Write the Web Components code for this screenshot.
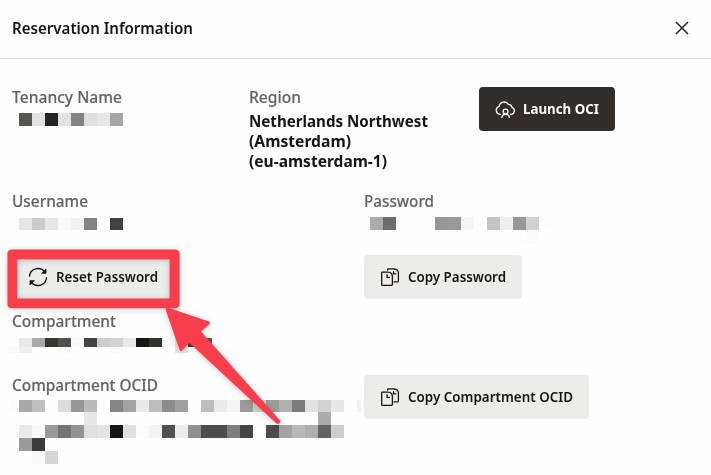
<!DOCTYPE html>
<html lang="en"><head><meta charset="utf-8"><title>Reservation Information</title>
<style>html,body{margin:0;background:#fefefe}body{width:711px;height:475px;overflow:hidden;font-family:"Noto Sans","Open Sans",sans-serif}</style></head>
<body><reservation-dialog></reservation-dialog>
<script>
// One line of text whose width is adjusted to a given measure.
customElements.define('fit-text', class extends HTMLElement {
  connectedCallback() {
    const r = this.attachShadow({mode:'open'});
    r.innerHTML = `<style>:host{display:block;white-space:nowrap;font-size:var(--size,16px);line-height:20px}span{display:inline-block;transform-origin:0 50%}</style><span><slot></slot></span>`;
    const s = r.querySelector('span'), w = +this.getAttribute('w');
    this.style.width = w + 'px';
    s.style.transform = `scaleX(${w / s.getBoundingClientRect().width})`;
  }
});
// Redacted value: rows of "indent:height:colours", "-" is an empty cell.
customElements.define('pixel-mask', class extends HTMLElement {
  connectedCallback() {
    const r = this.attachShadow({mode:'open'});
    const rows = this.getAttribute('rows').split('|').map(t => {
      const [x,h,c] = t.trim().split(':');
      return `<div style="height:${h}px;margin-left:${x}px">` + c.split(' ').map(k => {
        const [col,w] = k.split('/');
        return `<i style="width:${w||13}px;${col==='-'?'':'background:#'+col}"></i>`;
      }).join('') + '</div>';
    }).join('');
    r.innerHTML = `<style>:host{display:block}div{display:flex}i{flex:none;height:100%}</style>${rows}`;
  }
});
const icons = {
  cloud:`<path d="M6.2 15.3H5A4.1 4.1 0 0 1 4.2 7.3 5 5 0 0 1 13.4 5.4 3.8 3.8 0 0 1 17 8.4 3.6 3.6 0 0 1 16.6 15.3H15"/><circle cx="10.6" cy="12.6" r="2.4"/><path d="M6.7 19C7.2 14 14 14 14.5 19"/>`,
  reset:`<path d="M1.5 9.8A8.5 8.5 0 0 1 16.8 5M18.5 10.2A8.5 8.5 0 0 1 3.2 15"/><path d="M18 2V6.3H13.6ZM2 18V13.7H6.4Z" fill="currentColor" stroke-width=".8"/>`,
  copy:`<path d="M7.6 3.4V2.5Q7.6 1.8 8.4 1.8H14Q18.4 2.3 18.4 6.2V14.1Q18.4 14.9 17.6 14.9H13.6M13.5 4V6.9H16.2"/><path d="M2.5 5.2H8Q12.4 5.6 12.4 9.6V17.6Q12.4 18.4 11.6 18.4H2.5Q1.7 18.4 1.7 17.6V6Q1.7 5.2 2.5 5.2ZM7 7.3V10.3H10"/>`
};
customElements.define('action-button', class extends HTMLElement {
  connectedCallback() {
    const r = this.attachShadow({mode:'open'});
    r.innerHTML = `<style>:host{display:block;width:max-content;--size:14.5px}button{all:unset;box-sizing:border-box;display:flex;align-items:center;height:44px;padding:0 16px;border-radius:4px;background:#ececea;color:#161513;font-weight:600;gap:8px}:host([dark]) button{background:#312d2a;color:#fff;font-weight:700}svg{width:20px;height:20px;flex:none;fill:none;stroke:currentColor;stroke-width:1.3;stroke-linejoin:round}fit-text{margin-top:-3px}</style><button><svg viewBox="0 0 20 20">${icons[this.getAttribute('icon')]}</svg><fit-text w="${this.getAttribute('w')}"><slot></slot></fit-text></button>`;
  }
});
customElements.define('info-field', class extends HTMLElement {
  connectedCallback() {
    const r = this.attachShadow({mode:'open'});
    r.innerHTML = `<style>:host{display:block}.l{color:#656461;font-weight:500;-webkit-text-stroke:.15px #656461}</style><fit-text class="l" w="${this.getAttribute('w')}">${this.getAttribute('label')}</fit-text><slot></slot>`;
  }
});
// Callout: frame round the reset button with an arrow that points to it.
customElements.define('callout-mark', class extends HTMLElement {
  connectedCallback() {
    this.attachShadow({mode:'open'}).innerHTML = `<style>:host{position:absolute;left:0;top:0;pointer-events:none;filter:drop-shadow(0 1px 3px #0003)}svg{display:block}</style>
    <svg width="320" height="440" viewBox="0 0 320 440" fill="#f83e4b"><path fill-rule="evenodd" d="M12 249.4H175Q179.6 249.4 179.6 254V303.5Q179.6 308.2 175 308.2H12Q7.4 308.2 7.4 303.5V254Q7.4 249.4 12 249.4ZM17 259.2V298.4H169.6V259.2Z"/><path stroke="#f83e4b" stroke-width="3" stroke-linejoin="round" d="M167 309L208.5 323 199 331.5 279 421.5 277.5 422.5 189.5 341 181 349.5Z"/></svg>`;
  }
});
customElements.define('reservation-dialog', class extends HTMLElement {
  connectedCallback() {
    this.attachShadow({mode:'open'}).innerHTML = `<style>
    :host{display:block;position:relative;height:475px}
    header{box-sizing:border-box;height:59px;border-bottom:1px solid #e3e3e3;padding:0 22px 2px 12px;display:flex;align-items:center;justify-content:space-between;color:#161513;font-weight:600}
    header svg{width:14px;height:14px;stroke:#222;stroke-width:1.5}
    main{padding:28px 0 0 12px;display:grid;grid-template-rows:104px 64px 56px 64px 100px}
    .three{display:grid;grid-template-columns:237px 230px auto}
    .two{display:grid;grid-template-columns:352px auto}
    .region{color:#161513;font-weight:700;padding-top:4px}
    </style>
    <header><fit-text w="181">Reservation Information</fit-text><svg viewBox="0 0 14 14"><path d="M1 1L13 13M13 1L1 13"/></svg></header>
    <main>
      <section class="three">
        <info-field label="Tenancy Name" w="110"><pixel-mask style="padding-top:6px" rows="7:13:555552 e2e2e2 262523 e2e2e2 838381 dedede e6e6e6 a5a5a3"></pixel-mask></info-field>
        <info-field label="Region" w="52"><div class="region"><fit-text w="179">Netherlands Northwest</fit-text><fit-text w="102">(Amsterdam)</fit-text><fit-text w="138">(eu-amsterdam-1)</fit-text></div></info-field>
        <action-button dark icon="cloud" w="76">Launch OCI</action-button>
      </section>
      <section class="two">
        <info-field label="Username" w="76"><pixel-mask style="padding-top:7px" rows="7:12:e6e6e6 cbcbcb e6e6e4 fafafa f1f1f1 838381 - 434340"></pixel-mask></info-field>
        <info-field label="Password" w="70"><pixel-mask style="padding-top:6px" rows="6:13:ababa9 6d6d6d - - - 979797 9a9a97 f5f5f5 - c4c4c4 eeeeee 979794 d0d0d0 fcfcfc|162:13:fbfbfb"></pixel-mask></info-field>
      </section>
      <section class="two">
        <action-button icon="reset" w="102">Reset Password</action-button>
        <action-button icon="copy" w="98">Copy Password</action-button>
      </section>
      <section>
        <info-field label="Compartment" w="104"><pixel-mask style="padding-top:7px" rows="7:9:e9e9e9 a9a9a9 353532 4f4f4d f9f9f9 434341 cdcdcb d3d3d3 e9e9e7 161614 32312e fafafa e5e5e5 434341 555552/11|-4:6:fafafa/11 efefef - - fafafa - - - fafafa fcfcfc - - - e8e8e8"></pixel-mask></info-field>
      </section>
      <section class="two">
        <info-field label="Compartment OCID" w="146"><pixel-mask style="padding-top:5px" rows="-2:12:fcfcfc/9 abaaa8 c0c0be - dcdcda 989898 bbbbb9 - 848482 a3a3a1 e9e9e7 bdbdbd 8d8d8d a09f9d - bdbdbb ebebeb f4f4f4 9c9c9a d0d0d0 9c9c9a b0b0b0 7b7b79 e1e1df d3d3d1 e8e8e8 - f4f4f4/4|72:13:e8e8e8 -/221 ababab|7:13:e9e9e9 fafafa 999997 757573 939391 e0e0de e3e3e3 161614 e1e1e1 fcfcfc f4f4f4 51504e ececea 8f8f8d 4e4d4b 4e4d4b 7e7e7c 464543 - 4c4b49 a3a3a3 b8b8b8 aeaeae 646464 cdcdcd|7:13:9b9b9b 3a3a38|20:13:fafafa d6d6d6"></pixel-mask></info-field>
        <action-button icon="copy" w="165">Copy Compartment OCID</action-button>
      </section>
    </main><callout-mark></callout-mark>`;
  }
});
</script></body></html>
